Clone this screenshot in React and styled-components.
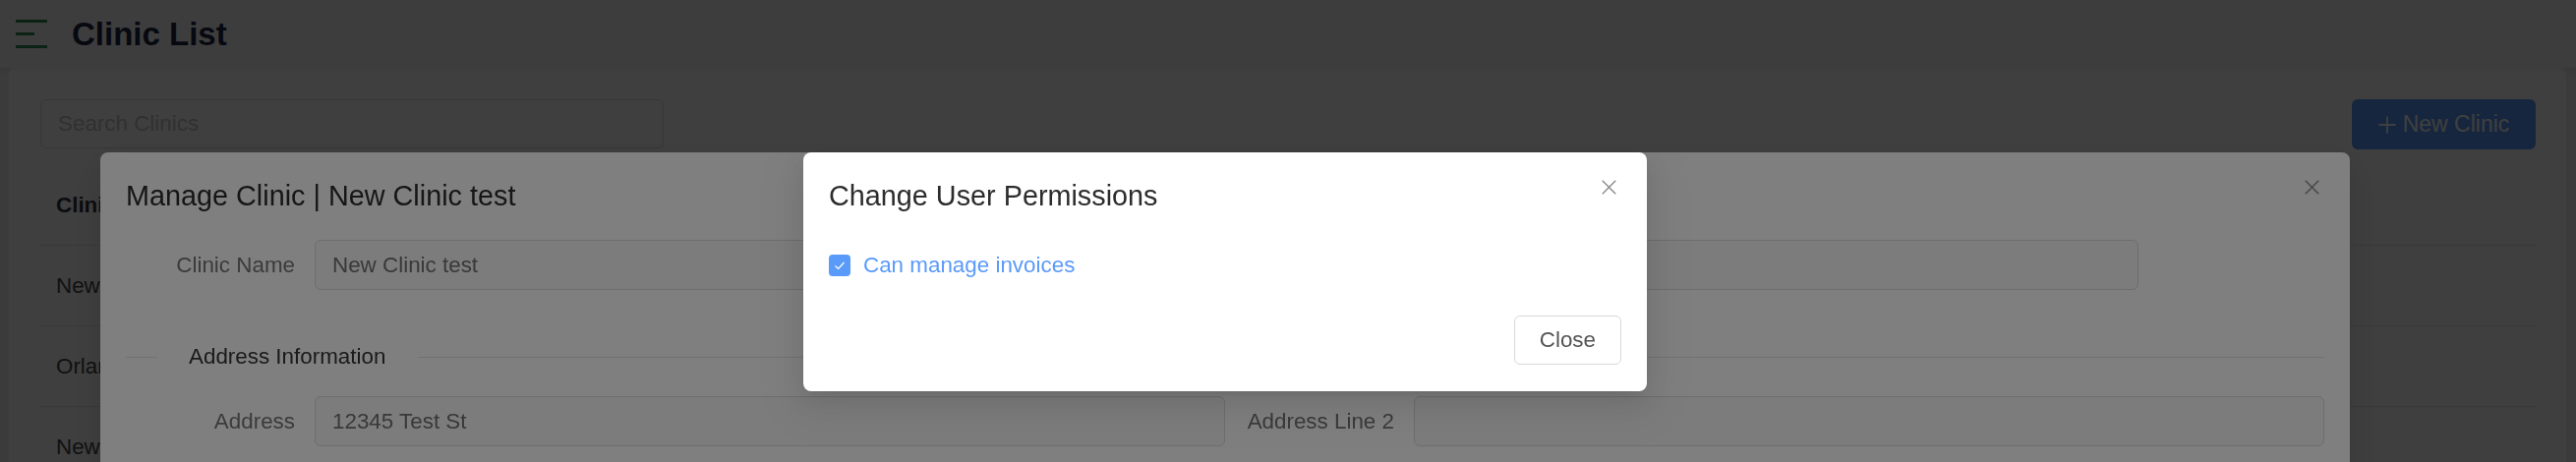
import React from "react";
import styled, { createGlobalStyle } from "styled-components";

const GlobalStyle = createGlobalStyle`
  html, body { margin: 0; padding: 0; }
  body {
    background: #ececec;
    font-family: "Liberation Sans", Arial, sans-serif;
    width: 2620px;
    height: 470px;
    overflow: hidden;
  }
  * { box-sizing: border-box; }
`;

const BLUE = "#5a9af9";

const Shell = styled.div`
  min-height: 470px;
`;

const Header = styled.header`
  height: 69px;
  display: flex;
  align-items: center;
  gap: 25px;
  padding-left: 16px;
  background: #f4f4f4;
  box-shadow: 0 2px 6px rgba(0, 0, 0, 0.06);
  position: relative;
`;

const PageTitle = styled.h1`
  margin: 0;
  font-size: 33px;
  line-height: 38px;
  font-weight: 700;
  color: #1f2744;
`;

const Main = styled.main`
  padding: 0 10px 0 9px;
`;

const Card = styled.section`
  background: #ffffff;
  border-radius: 6px 6px 0 0;
  padding: 32px 31px 0 32px;
  min-height: 401px;
`;

const Toolbar = styled.div`
  display: flex;
  justify-content: space-between;
  align-items: flex-start;
`;

const SearchInput = styled.input`
  width: 634px;
  height: 50px;
  border: 1px solid #d9d9d9;
  border-radius: 6px;
  padding: 0 17px;
  font-family: inherit;
  font-size: 22.4px;
  color: #333;
  background: #fff;
  outline: none;
  &::placeholder { color: #c4c4c4; }
`;

const PrimaryButton = styled.button`
  height: 51px;
  width: 187px;
  display: flex;
  align-items: center;
  justify-content: center;
  gap: 7px;
  border: none;
  border-radius: 6px;
  background: ${BLUE};
  color: #fff;
  font-family: inherit;
  font-size: 23px;
  padding: 0;
`;

const Table = styled.div`
  margin-top: 16px;
`;

const TableRow = styled.div`
  display: flex;
  height: 82px;
  align-items: center;
  border-bottom: 1px solid #e3e3e3;
`;

const Cell = styled.div`
  padding: 0 16px;
  font-size: 22.4px;
  font-weight: ${(p) => (p.$head ? 700 : 400)};
  color: ${(p) => (p.$head ? "#2e3444" : "#474747")};
  white-space: nowrap;
`;

const Mask = styled.div`
  position: fixed;
  inset: 0;
  background: rgba(0, 0, 0, 0.5);
`;

const ModalLayer = styled.div`
  position: fixed;
  inset: 0;
  display: flex;
  justify-content: center;
  align-items: flex-start;
  padding: 155px 128px 0 0;
  overflow: hidden;
`;

const Dialog = styled.div`
  position: relative;
  width: ${(p) => p.$width}px;
  min-height: ${(p) => p.$minHeight || 0}px;
  flex: none;
  background: #fff;
  border-radius: 8px;
  padding: 24px 26px 27px;
  box-shadow: 0 10px 26px rgba(0, 0, 0, 0.08), 0 5px 10px -6px rgba(0, 0, 0, 0.12),
    0 14px 45px 13px rgba(0, 0, 0, 0.05);
`;

const DialogTitle = styled.h2`
  margin: 0;
  font-size: 28.8px;
  line-height: 40px;
  font-weight: 400;
  color: #2c2c2c;
`;

const CloseX = styled.button`
  position: absolute;
  top: 28px;
  right: 31px;
  width: 15px;
  height: 15px;
  padding: 0;
  border: none;
  background: none;
  display: flex;
`;

const Form = styled.div`
  margin-top: 25px;
`;

const TwoCol = styled.div`
  display: grid;
  grid-template-columns: 1fr 1fr;
`;

const Field = styled.div`
  display: grid;
  grid-template-columns: 172px 1fr;
  column-gap: 20px;
  align-items: center;
  margin-right: ${(p) => p.$trail || 0}px;
`;

const Label = styled.label`
  text-align: right;
  font-size: 22.4px;
  color: #767676;
  white-space: nowrap;
`;

const TextInput = styled.input`
  width: 100%;
  height: 51px;
  border: 1px solid #dcdcdc;
  border-radius: 6px;
  padding: 0 17px;
  font-family: inherit;
  font-size: 22.4px;
  color: #727272;
  background: #f8f8f8;
  outline: none;
`;

const SectionDivider = styled.div`
  display: flex;
  align-items: center;
  height: 36px;
  margin: 50px 0 22px;
  &::before {
    content: "";
    width: 32px;
    border-top: 1px solid #e2e2e2;
  }
  &::after {
    content: "";
    flex: 1;
    border-top: 1px solid #e2e2e2;
  }
`;

const DividerText = styled.span`
  padding: 0 33px 0 32px;
  font-size: 22.4px;
  color: #353535;
`;

const DialogBody = styled.div`
  margin-top: 33px;
`;

const CheckRow = styled.label`
  display: flex;
  align-items: center;
  gap: 13px;
  height: 36px;
  font-size: 22.4px;
  color: ${BLUE};
`;

const CheckBox = styled.span`
  width: 22px;
  height: 22px;
  border-radius: 4px;
  background: ${BLUE};
  display: flex;
  align-items: center;
  justify-content: center;
`;

const DialogFooter = styled.div`
  margin-top: 33px;
  display: flex;
  justify-content: flex-end;
`;

const GhostButton = styled.button`
  height: 50px;
  padding: 0 25px;
  border: 1px solid #d9d9d9;
  border-radius: 6px;
  background: #fff;
  font-family: inherit;
  font-size: 22.4px;
  color: #555;
`;

const MenuIcon = () => (
  <svg width="32" height="29" viewBox="0 0 32 29">
    <rect x="0" y="0" width="32" height="3" fill="#2f8a50" />
    <rect x="0" y="13" width="19" height="3" fill="#2f8a50" />
    <rect x="0" y="26" width="32" height="3" fill="#2f8a50" />
  </svg>
);

const XIcon = () => (
  <svg width="15" height="15" viewBox="0 0 15 15">
    <path d="M0.8 0.8 L14.2 14.2 M14.2 0.8 L0.8 14.2" stroke="#8a8a8a" strokeWidth="1.4" fill="none" />
  </svg>
);

const PlusIcon = () => (
  <svg width="18" height="18" viewBox="0 0 18 18">
    <path d="M9 0.5 V17.5 M0.5 9 H17.5" stroke="#fff" strokeWidth="1.8" fill="none" />
  </svg>
);

const CheckIcon = () => (
  <svg width="22" height="22" viewBox="0 0 22 22">
    <polyline points="6.5,11.5 9.6,14.4 15.5,8" stroke="#fff" strokeWidth="1.3" fill="none" />
  </svg>
);

const clinics = ["New Clinic test", "Orlando Clinic", "New Port Clinic"];

export default function App() {
  return (
    <Shell>
      <GlobalStyle />
      <Header>
        <MenuIcon />
        <PageTitle>Clinic List</PageTitle>
      </Header>
      <Main>
        <Card>
          <Toolbar>
            <SearchInput placeholder="Search Clinics" />
            <PrimaryButton>
              <PlusIcon />
              New Clinic
            </PrimaryButton>
          </Toolbar>
          <Table>
            <TableRow>
              <Cell $head>Clinic Name</Cell>
            </TableRow>
            {clinics.map((c) => (
              <TableRow key={c}>
                <Cell>{c}</Cell>
              </TableRow>
            ))}
          </Table>
        </Card>
      </Main>

      <Mask />
      <ModalLayer>
        <Dialog $width={2288} $minHeight={420}>
          <DialogTitle>Manage Clinic | New Clinic test</DialogTitle>
          <CloseX aria-label="Close">
            <XIcon />
          </CloseX>
          <Form>
            <Field $trail={189}>
              <Label>Clinic Name</Label>
              <TextInput readOnly value="New Clinic test" />
            </Field>
            <SectionDivider>
              <DividerText>Address Information</DividerText>
            </SectionDivider>
            <TwoCol>
              <Field>
                <Label>Address</Label>
                <TextInput readOnly value="12345 Test St" />
              </Field>
              <Field>
                <Label>Address Line 2</Label>
                <TextInput readOnly value="" />
              </Field>
            </TwoCol>
          </Form>
        </Dialog>
      </ModalLayer>

      <Mask />
      <ModalLayer>
        <Dialog $width={858}>
          <DialogTitle>Change User Permissions</DialogTitle>
          <CloseX aria-label="Close">
            <XIcon />
          </CloseX>
          <DialogBody>
            <CheckRow>
              <CheckBox>
                <CheckIcon />
              </CheckBox>
              Can manage invoices
            </CheckRow>
          </DialogBody>
          <DialogFooter>
            <GhostButton>Close</GhostButton>
          </DialogFooter>
        </Dialog>
      </ModalLayer>
    </Shell>
  );
}
